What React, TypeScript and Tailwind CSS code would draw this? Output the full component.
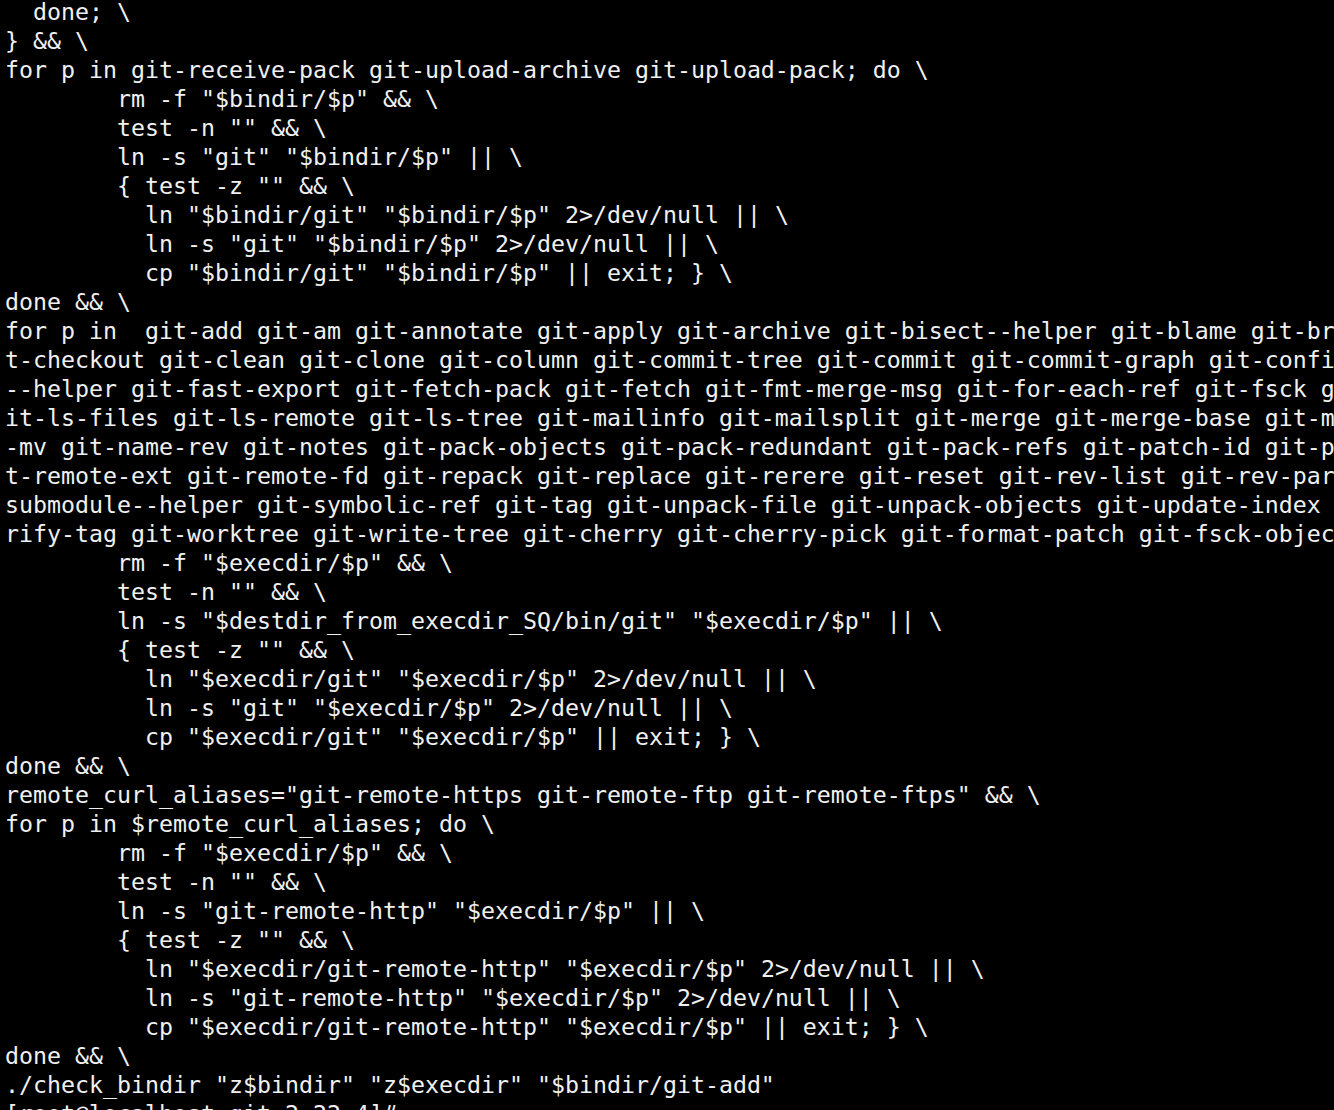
const lines: string[] = [
  '  done; \\',
  '} && \\',
  'for p in git-receive-pack git-upload-archive git-upload-pack; do \\',
  '\trm -f "$bindir/$p" && \\',
  '\ttest -n "" && \\',
  '\tln -s "git" "$bindir/$p" || \\',
  '\t{ test -z "" && \\',
  '\t  ln "$bindir/git" "$bindir/$p" 2>/dev/null || \\',
  '\t  ln -s "git" "$bindir/$p" 2>/dev/null || \\',
  '\t  cp "$bindir/git" "$bindir/$p" || exit; } \\',
  'done && \\',
  'for p in  git-add git-am git-annotate git-apply git-archive git-bisect--helper git-blame git-branch git-bundle gi',
  't-checkout git-clean git-clone git-column git-commit-tree git-commit git-commit-graph git-config git-count-objects',
  '--helper git-fast-export git-fetch-pack git-fetch git-fmt-merge-msg git-for-each-ref git-fsck git-gc git-get-tar-',
  'it-ls-files git-ls-remote git-ls-tree git-mailinfo git-mailsplit git-merge git-merge-base git-merge-file git-merg',
  '-mv git-name-rev git-notes git-pack-objects git-pack-redundant git-pack-refs git-patch-id git-prune git-prune-pac',
  't-remote-ext git-remote-fd git-repack git-replace git-rerere git-reset git-rev-list git-rev-parse git-revert git-',
  'submodule--helper git-symbolic-ref git-tag git-unpack-file git-unpack-objects git-update-index git-update-ref git',
  'rify-tag git-worktree git-write-tree git-cherry git-cherry-pick git-format-patch git-fsck-objects git-init git-me',
  '\trm -f "$execdir/$p" && \\',
  '\ttest -n "" && \\',
  '\tln -s "$destdir_from_execdir_SQ/bin/git" "$execdir/$p" || \\',
  '\t{ test -z "" && \\',
  '\t  ln "$execdir/git" "$execdir/$p" 2>/dev/null || \\',
  '\t  ln -s "git" "$execdir/$p" 2>/dev/null || \\',
  '\t  cp "$execdir/git" "$execdir/$p" || exit; } \\',
  'done && \\',
  'remote_curl_aliases="git-remote-https git-remote-ftp git-remote-ftps" && \\',
  'for p in $remote_curl_aliases; do \\',
  '\trm -f "$execdir/$p" && \\',
  '\ttest -n "" && \\',
  '\tln -s "git-remote-http" "$execdir/$p" || \\',
  '\t{ test -z "" && \\',
  '\t  ln "$execdir/git-remote-http" "$execdir/$p" 2>/dev/null || \\',
  '\t  ln -s "git-remote-http" "$execdir/$p" 2>/dev/null || \\',
  '\t  cp "$execdir/git-remote-http" "$execdir/$p" || exit; } \\',
  'done && \\',
  './check_bindir "z$bindir" "z$execdir" "$bindir/git-add"',
  '[root@localhost git-2.22.4]# ',
];

export default function App() {
  return (
    <div className="w-[1334px] h-[1110px] bg-black overflow-hidden">
      <pre
        className="-mt-[3px] pl-[5px] text-[#f0f0f0] text-[23.25px] leading-[29px] whitespace-pre [tab-size:8] font-['DejaVu_Sans_Mono',monospace]"
      >
        {lines.map((l, i) => (
          <div key={i}>{l}</div>
        ))}
      </pre>
    </div>
  );
}
